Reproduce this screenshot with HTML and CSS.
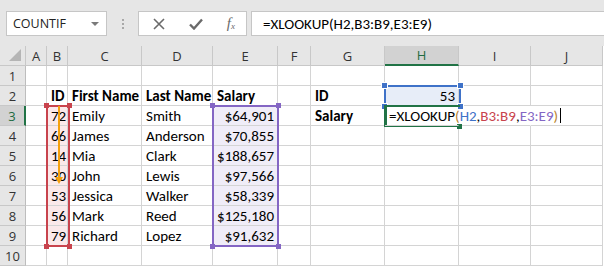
FILE: index.html
```html
<!DOCTYPE html>
<html lang="en">
<head>
  <meta charset="UTF-8">
  <title>XLOOKUP</title>
  <link rel="stylesheet" href="styles.css">
</head>
<body>

<div class="toolbar">
  <div class="namebox">
    <span>COUNTIF</span>
    <span class="drop"></span>
  </div>
  <div class="grip"><i></i><i></i><i></i></div>
  <div class="buttons">
    <svg width="12" height="12" viewBox="0 0 12 12"><path d="M1 1 L11 11 M11 1 L1 11" stroke="#6a6a6a" stroke-width="1.6"/></svg>
    <svg width="14" height="12" viewBox="0 0 14 12"><path d="M1 6.5 L5 10.5 L13 1.5" stroke="#6a6a6a" stroke-width="2.4" fill="none"/></svg>
    <span class="fx"><i>f</i><sub>x</sub></span>
  </div>
  <div class="formula">=XLOOKUP(H2,B3:B9,E3:E9)</div>
</div>

<div class="sheet">
  <div class="grid">
    <!-- column headers -->
    <div class="corner"><span class="tri"></span></div>
    <div class="hd">A</div><div class="hd">B</div><div class="hd">C</div><div class="hd">D</div><div class="hd">E</div>
    <div class="hd">F</div><div class="hd">G</div><div class="hd sel-col">H</div><div class="hd">I</div><div class="hd">J</div>

    <div class="rh">1</div>
    <div class="c"></div><div class="c"></div><div class="c"></div><div class="c"></div><div class="c"></div>
    <div class="c"></div><div class="c"></div><div class="c"></div><div class="c"></div><div class="c"></div>

    <div class="rh">2</div>
    <div class="c"></div><div class="c b">ID</div><div class="c b">First Name</div><div class="c b">Last Name</div><div class="c b">Salary</div>
    <div class="c"></div><div class="c b">ID</div><div class="c num bl">53</div><div class="c"></div><div class="c"></div>

    <div class="rh sel-row">3</div>
    <div class="c"></div><div class="c num pk">72</div><div class="c">Emily</div><div class="c">Smith</div><div class="c num lv">$64,901</div>
    <div class="c"></div><div class="c b">Salary</div>
    <div class="c spill edit">=XLOOKUP<span class="par">(</span><span class="r-h">H2</span>,<span class="r-b">B3:B9</span>,<span class="r-e">E3:E9</span><span class="par">)</span><span class="caret"></span></div>
    <div class="c spill"></div><div class="c"></div>

    <div class="rh">4</div>
    <div class="c"></div><div class="c num pk">66</div><div class="c">James</div><div class="c">Anderson</div><div class="c num lv">$70,855</div>
    <div class="c"></div><div class="c"></div><div class="c"></div><div class="c"></div><div class="c"></div>

    <div class="rh">5</div>
    <div class="c"></div><div class="c num pk">14</div><div class="c">Mia</div><div class="c">Clark</div><div class="c num lv">$188,657</div>
    <div class="c"></div><div class="c"></div><div class="c"></div><div class="c"></div><div class="c"></div>

    <div class="rh">6</div>
    <div class="c"></div><div class="c num pk">30</div><div class="c">John</div><div class="c">Lewis</div><div class="c num lv">$97,566</div>
    <div class="c"></div><div class="c"></div><div class="c"></div><div class="c"></div><div class="c"></div>

    <div class="rh">7</div>
    <div class="c"></div><div class="c num pk">53</div><div class="c">Jessica</div><div class="c">Walker</div><div class="c num lv">$58,339</div>
    <div class="c"></div><div class="c"></div><div class="c"></div><div class="c"></div><div class="c"></div>

    <div class="rh">8</div>
    <div class="c"></div><div class="c num pk">56</div><div class="c">Mark</div><div class="c">Reed</div><div class="c num lv">$125,180</div>
    <div class="c"></div><div class="c"></div><div class="c"></div><div class="c"></div><div class="c"></div>

    <div class="rh">9</div>
    <div class="c"></div><div class="c num pk">79</div><div class="c">Richard</div><div class="c">Lopez</div><div class="c num lv">$91,632</div>
    <div class="c"></div><div class="c"></div><div class="c"></div><div class="c"></div><div class="c"></div>

    <div class="rh">10</div>
    <div class="c"></div><div class="c"></div><div class="c"></div><div class="c"></div><div class="c"></div>
    <div class="c"></div><div class="c"></div><div class="c"></div><div class="c"></div><div class="c"></div>
  </div>

  <!-- range highlights drawn over the grid -->
  <div class="range range-b">
    <span class="h tl"></span><span class="h tr"></span><span class="h bl"></span><span class="h br"></span>
  </div>
  <svg class="arrow" width="10" height="80" viewBox="0 0 10 80">
    <path d="M5 0 V73" stroke="#f5a00e" stroke-width="2"/>
    <path d="M1 71 L9 71 L5 78 Z" fill="#f5a00e"/>
  </svg>
  <div class="range range-e">
    <span class="h tl"></span><span class="h tr"></span><span class="h bl"></span><span class="h br"></span>
  </div>
  <div class="range range-h">
    <span class="h tl"></span><span class="h tr"></span><span class="h bl"></span><span class="h br"></span>
  </div>
  <div class="active-cell"><span class="h br"></span></div>
</div>

</body>
</html>
```

FILE: styles.css
```css
:root {
  --bar: #e6e6e6;
  --line: #d4d4d4;
  --head-line: #c8c8c8;
  --green: #217346;
  --red: #c8434d;
  --purple: #8466c4;
  --blue: #3f72c8;
}

* {
  margin: 0;
  padding: 0;
  box-sizing: border-box;
}

body {
  width: 604px;
  height: 267px;
  overflow: hidden;
  background: #fff;
  font-family: "Carlito", "Lato", sans-serif;
  color: #000;
}

/* ---------- formula bar ---------- */

.toolbar {
  height: 46px;
  background: var(--bar);
  display: flex;
  align-items: flex-start;
  padding: 11px 0 0 6px;
}

.namebox {
  width: 101px;
  height: 25px;
  background: #fff;
  border: 1px solid #c6c6c6;
  display: flex;
  align-items: center;
  justify-content: space-between;
  padding: 0 6px 0 6px;
  font-family: "Open Sans", sans-serif;
  font-size: 12.5px;
  color: #222;
}

.drop {
  width: 0;
  height: 0;
  border-left: 4px solid transparent;
  border-right: 4px solid transparent;
  border-top: 4px solid #7a7a7a;
  margin-right: 1px;
}

.grip {
  width: 31px;
  height: 25px;
  display: flex;
  flex-direction: column;
  align-items: center;
  justify-content: center;
  gap: 2px;
}

.grip i {
  width: 2px;
  height: 2px;
  background: #a8a8a8;
}

.buttons {
  width: 109px;
  height: 25px;
  background: #fff;
  border: 1px solid #c6c6c6;
  display: flex;
  align-items: center;
  justify-content: space-between;
  padding: 0 11px 0 14px;
}

.fx {
  font-family: "Liberation Serif", serif;
  font-size: 15px;
  color: #6a6a6a;
  line-height: 1;
}

.fx sub {
  font-size: 9px;
  font-style: italic;
  vertical-align: baseline;
  position: relative;
  top: 1px;
}

.formula {
  flex: 1;
  height: 25px;
  margin-left: 4px;
  background: #fff;
  border: 1px solid #c6c6c6;
  border-right: none;
  padding: 0 0 0 11px;
  font-size: 15px;
  line-height: 24px;
}

/* ---------- sheet ---------- */

.sheet {
  position: relative;
}

.grid {
  display: grid;
  grid-template-columns: 26px 21px 21px 74px 71px 65px 33px 74px 74px 72px 72px;
  grid-auto-rows: 20px;
}

.corner,
.hd,
.rh {
  background: var(--bar);
  border-right: 1px solid var(--head-line);
  border-bottom: 1px solid var(--head-line);
  font-family: "Open Sans", sans-serif;
  font-size: 13px;
  color: #333;
  display: flex;
  align-items: center;
  justify-content: center;
}

.rh {
  border-right-color: #bdbdbd;
}

.corner {
  position: relative;
}

.tri {
  position: absolute;
  right: 4px;
  bottom: 4px;
  width: 0;
  height: 0;
  border-left: 12px solid transparent;
  border-bottom: 12px solid #b5b5b5;
}

.sel-col {
  background: #d2d2d2;
  border-bottom: 2px solid var(--green);
  color: #1e6b41;
}

.sel-row {
  background: #d2d2d2;
  border-right: 2px solid var(--green);
  color: #1e6b41;
}

.c {
  border-right: 1px solid var(--line);
  border-bottom: 1px solid var(--line);
  padding: 1px 3px 0 4px;
  font-size: 15px;
  line-height: 19px;
  white-space: nowrap;
}

.b {
  font-weight: bold;
}

.num {
  text-align: right;
  padding-right: 3px;
}

.pk {
  background: #fbe9ea;
}

.lv {
  background: #f0edf8;
}

.bl {
  background: #e7edf8;
}

.spill {
  border-right-color: transparent;
}

.edit {
  position: relative;
  z-index: 2;
}

.par {
  color: #b8822c;
}

.r-h {
  color: var(--blue);
}

.r-b {
  color: var(--red);
}

.r-e {
  color: var(--purple);
}

.caret {
  display: inline-block;
  width: 1px;
  height: 15px;
  background: #000;
  margin-left: 2px;
  vertical-align: -2px;
}

/* ---------- range outlines ---------- */

.range,
.active-cell {
  position: absolute;
  border: 2px solid;
}

.range-b {
  left: 46px;
  top: 59px;
  width: 24px;
  height: 142px;
  border-color: var(--red);
}

.range-e {
  left: 212px;
  top: 59px;
  width: 67px;
  height: 142px;
  border-color: var(--purple);
}

.range-h {
  left: 384px;
  top: 39px;
  width: 77px;
  height: 22px;
  border-color: var(--blue);
}

.active-cell {
  left: 384px;
  top: 59px;
  width: 76px;
  height: 22px;
  border-color: var(--green);
  border-left-width: 3px;
  border-right: none;
}

.h {
  position: absolute;
  width: 5px;
  height: 5px;
  background: inherit;
}

.range-b .h { background: var(--red); }
.range-e .h { background: var(--purple); }
.range-h .h { background: var(--blue); border: 1px solid #fff; width: 7px; height: 7px; }
.active-cell .h { background: var(--green); }

.tl { left: -4px; top: -4px; }
.tr { right: -4px; top: -4px; }
.bl { left: -4px; bottom: -4px; }
.br { right: -4px; bottom: -4px; }

.range-h .tl { left: -5px; top: -5px; }
.range-h .tr { right: -5px; top: -5px; }
.range-h .bl { left: -5px; bottom: -5px; }
.range-h .br { right: -5px; bottom: -5px; }

.active-cell .br { right: -2px; bottom: -4px; }

.arrow {
  position: absolute;
  left: 54px;
  top: 60px;
}
```
